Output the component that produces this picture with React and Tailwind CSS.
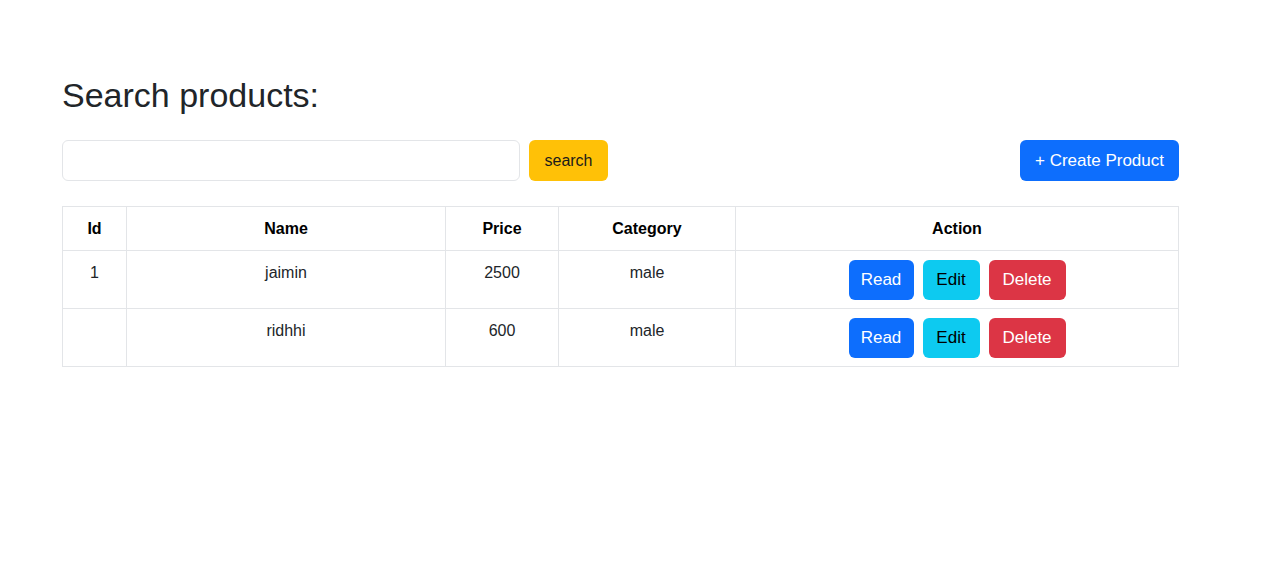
export default function App() {
  const products = [
    { id: "1", name: "jaimin", price: "2500", category: "male" },
    { id: "", name: "ridhhi", price: "600", category: "male" },
  ];

  return (
    <div className="min-h-screen bg-white text-[#212529] font-['Liberation_Sans',Arial,sans-serif]">
      <div className="w-[1117px] ml-[62px] pt-[74px]">
        <h1 className="text-[34px] leading-[42px] font-medium mb-[24px]">Search products:</h1>

        {/* search bar */}
        <div className="flex items-center h-[41px]">
          <input
            type="text"
            className="w-[458px] h-[41px] rounded-md border border-[#e3e5e8] px-3 outline-none"
          />
          <button className="ml-[9px] w-[79px] h-[41px] rounded-md bg-[#ffc107] text-[#1b1b1b] text-[16px]">
            search
          </button>
          <button className="ml-auto w-[159px] h-[41px] rounded-md bg-[#0d6efd] text-white text-[17px]">
            + Create Product
          </button>
        </div>

        {/* table */}
        <table className="mt-[25px] w-[1117px] border-collapse border border-[#e3e5e8] text-[16px]">
          <thead>
            <tr className="h-[44px]">
              <th className="w-[64px] border border-[#e3e5e8] font-bold text-black">Id</th>
              <th className="w-[319px] border border-[#e3e5e8] font-bold text-black">Name</th>
              <th className="w-[113px] border border-[#e3e5e8] font-bold text-black">Price</th>
              <th className="w-[177px] border border-[#e3e5e8] font-bold text-black">Category</th>
              <th className="border border-[#e3e5e8] font-bold text-black">Action</th>
            </tr>
          </thead>
          <tbody>
            {products.map((p, i) => (
              <tr key={i} className="h-[58px]">
                <td className="border border-[#e3e5e8] text-center align-top pt-[10px]">{p.id}</td>
                <td className="border border-[#e3e5e8] text-center align-top pt-[10px]">{p.name}</td>
                <td className="border border-[#e3e5e8] text-center align-top pt-[10px]">{p.price}</td>
                <td className="border border-[#e3e5e8] text-center align-top pt-[10px]">{p.category}</td>
                <td className="border border-[#e3e5e8] align-middle">
                  <div className="flex justify-center gap-[9px]">
                    <button className="w-[65px] h-[40px] rounded-md bg-[#0d6efd] text-white text-[17px]">Read</button>
                    <button className="w-[57px] h-[40px] rounded-md bg-[#0dcaf0] text-black text-[17px]">Edit</button>
                    <button className="w-[77px] h-[40px] rounded-md bg-[#dc3545] text-white text-[17px]">Delete</button>
                  </div>
                </td>
              </tr>
            ))}
          </tbody>
        </table>
      </div>
    </div>
  );
}
